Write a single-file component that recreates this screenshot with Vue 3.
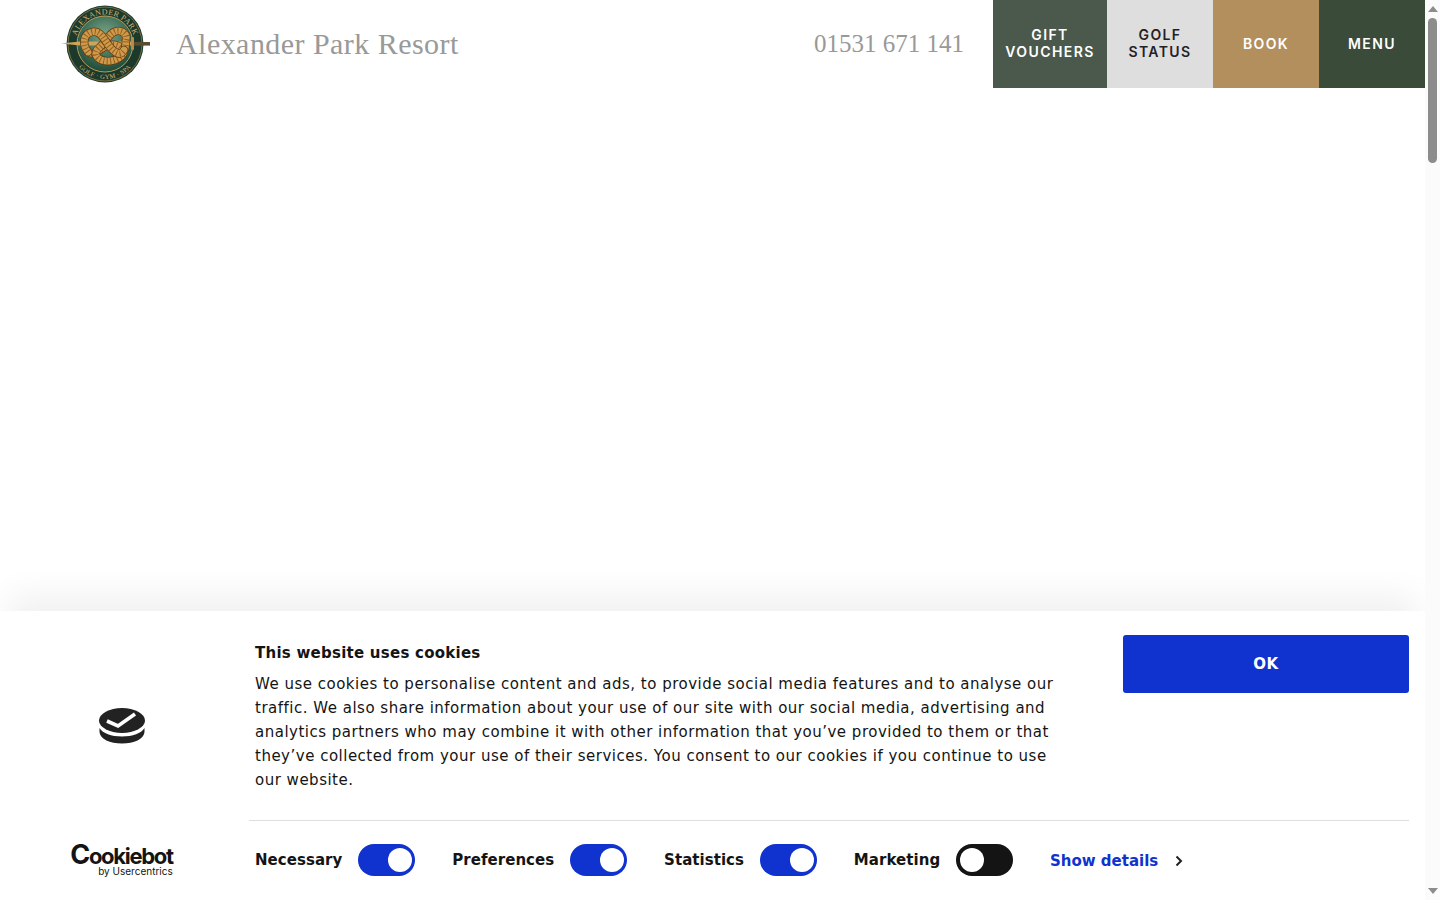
<script setup>
const buttons = [
  { lines: ['GIFT', 'VOUCHERS'], cls: 'btn-gift' },
  { lines: ['GOLF', 'STATUS'], cls: 'btn-golf' },
  { lines: ['BOOK'], cls: 'btn-book' },
  { lines: ['MENU'], cls: 'btn-menu' }
]

const toggles = [
  { label: 'Necessary', on: true },
  { label: 'Preferences', on: true },
  { label: 'Statistics', on: true },
  { label: 'Marketing', on: false }
]

// the knot is three rope pieces, each drawn three times: edge, body, twist marks
const ropes = [
  'M28 52 C36 57 40 46 50 45 C56 44 60 46 62 50',
  'M66 40 C68 33 60 29 54 32 C48 35 46 42 40 47 C36 50 34 54 38 58 C44 63 58 62 63 54 C65 50 66 46 66 40',
  'M28 52 C22 44 23 34 32 32 C41 30 44 40 50 47 C54 52 60 57 64 50'
]
</script>

<template>
  <div class="page">
    <div class="main">
      <header class="header">
        <svg class="logo" width="92" height="88" viewBox="0 0 92 88">
          <defs>
            <radialGradient id="medal" cx="50%" cy="35%" r="65%">
              <stop offset="0%" stop-color="#7fa78a" />
              <stop offset="60%" stop-color="#3f7059" />
              <stop offset="100%" stop-color="#1f4a37" />
            </radialGradient>
            <path id="arcTop" d="M 15.5 44 A 29.5 29.5 0 0 1 74.5 44" />
            <path id="arcBottom" d="M 10 44 A 35 35 0 0 0 80 44" />
          </defs>
          <circle cx="45" cy="44" r="38.5" fill="#1c3a2c" />
          <circle cx="45" cy="44" r="37" fill="none" stroke="#8d7a45" stroke-width="0.8" />
          <circle cx="45" cy="44" r="28" fill="url(#medal)" stroke="#b79c5c" stroke-width="1" />
          <text class="logo-txt"><textPath href="#arcTop" startOffset="50%" text-anchor="middle">ALEXANDER PARK</textPath></text>
          <text class="logo-txt small"><textPath href="#arcBottom" startOffset="50%" text-anchor="middle">GOLF · GYM · SPA</textPath></text>
          <path d="M1 43.5 L20 41.5 L72 41.5 L72 45.5 L20 45.5 Z" fill="#d2a456" />
          <rect x="71" y="37" width="3" height="13" rx="1" fill="#b58c45" />
          <rect x="74" y="42" width="16" height="3.6" fill="#5d4a30" />
          <g v-for="d in ropes" :key="d" fill="none">
            <path :d="d" stroke="#5f3b12" stroke-width="8.4" stroke-linecap="round" />
            <path :d="d" stroke="#d09a4c" stroke-width="6.8" stroke-linecap="round" />
            <path :d="d" stroke="#93601f" stroke-width="6.4" stroke-dasharray="1 2.4" />
          </g>
        </svg>
        <div class="title">Alexander Park Resort</div>
        <div class="phone">01531 671 141</div>
        <nav class="nav">
          <a v-for="b in buttons" :key="b.cls" class="nav-btn" :class="b.cls">
            <span v-for="line in b.lines" :key="line">{{ line }}</span>
          </a>
        </nav>
      </header>

      <section class="dialog">
        <div class="brand">
          <svg class="cookie-icon" width="46" height="36" viewBox="0 0 46 36">
            <path d="M0.5 20 C4 25.5 12 28.5 23 28.5 C34 28.5 42 25.5 45.5 20 L45.5 24 C45 31 35 35.5 23 35.5 C11 35.5 1 31 0.5 24 Z" fill="#222" />
            <ellipse cx="23" cy="12.5" rx="23" ry="12.5" fill="#222" />
            <path d="M8 13 L19 18 L36 6" fill="none" stroke="#fff" stroke-width="3.6" />
          </svg>
          <div class="cookiebot">
            <div class="cb-name"><span class="cb-c">C</span>ookiebot</div>
            <div class="cb-by">by Usercentrics</div>
          </div>
        </div>

        <div class="content">
          <div class="top">
            <div class="copy">
              <h2 class="heading">This website uses cookies</h2>
              <p class="text">We use cookies to personalise content and ads, to provide social media features and to analyse our traffic. We also share information about your use of our site with our social media, advertising and analytics partners who may combine it with other information that you’ve provided to them or that they’ve collected from your use of their services. You consent to our cookies if you continue to use our website.</p>
            </div>
            <button class="ok">OK</button>
          </div>
          <div class="controls">
            <div v-for="t in toggles" :key="t.label" class="control">
              <span class="control-label">{{ t.label }}</span>
              <span class="switch" :class="{ off: !t.on }"><span class="knob"></span></span>
            </div>
            <a class="details">Show details
              <svg class="chevron" width="8" height="12" viewBox="0 0 8 12"><path d="M1.5 1.5 L6 6 L1.5 10.5" fill="none" stroke="#222" stroke-width="2" /></svg>
            </a>
          </div>
        </div>
      </section>
    </div>

    <aside class="scrollbar">
      <span class="arrow up"></span>
      <span class="thumb"></span>
      <span class="arrow down"></span>
    </aside>
  </div>
</template>

<style>
html, body {
  margin: 0;
  overflow: hidden;
  background: #fff;
}
</style>

<style scoped>
.page {
  display: flex;
  height: 900px;
  overflow: hidden;
}
.main {
  flex: 1;
  display: flex;
  flex-direction: column;
  justify-content: space-between;
  min-width: 0;
}
.header {
  display: flex;
  align-items: center;
  height: 88px;
  padding-left: 60px;
}
.logo {
  flex: none;
}
.logo-txt {
  font-family: "Liberation Serif", serif;
  font-size: 8px;
  letter-spacing: 0.3px;
  fill: #d0b678;
}
.logo-txt.small {
  font-size: 6.5px;
}
.title {
  margin-left: 24px;
  font-family: "Liberation Serif", serif;
  font-size: 30px;
  letter-spacing: 0.45px;
  color: #999;
}
.phone {
  margin-left: auto;
  margin-right: 29px;
  font-family: "Liberation Serif", serif;
  font-size: 25px;
  color: #999;
}
.nav {
  display: flex;
  height: 88px;
}
.nav-btn {
  display: flex;
  flex-direction: column;
  align-items: center;
  justify-content: center;
  width: 106px;
  padding-bottom: 2px;
  box-sizing: border-box;
  font-family: Inter, sans-serif;
  font-size: 14px;
  font-weight: 600;
  line-height: 17px;
  letter-spacing: 1.4px;
  color: #fff;
}
.btn-gift {
  width: 114px;
  background: #4a594c;
}
.btn-golf {
  background: #dedede;
  color: #1f2326;
}
.btn-book {
  background: #b38f5e;
}
.btn-menu {
  background: #3a4b3a;
}
.dialog {
  display: flex;
  height: 289px;
  box-sizing: border-box;
  background: #fff;
  box-shadow: 0 -24px 32px -8px rgba(0, 0, 0, 0.06);
  font-family: "DejaVu Sans", sans-serif;
  color: #141414;
}
.brand {
  flex: none;
  width: 249px;
  box-sizing: border-box;
  display: flex;
  flex-direction: column;
  align-items: center;
  padding-top: 97px;
}
.cookie-icon {
  margin-left: -6px;
}
.cookiebot {
  margin-top: 102px;
  margin-left: -6px;
  text-align: right;
  font-family: Inter, sans-serif;
  color: #141414;
}
.cb-name {
  font-size: 22px;
  font-weight: 700;
  line-height: 18px;
  letter-spacing: -1.3px;
}
.cb-c {
  font-size: 27px;
  line-height: 18px;
}
.cb-by {
  margin-top: 1px;
  font-size: 10px;
  line-height: 11px;
}
.content {
  flex: 1;
  min-width: 0;
  padding: 24px 16px 0 0;
}
.top {
  display: flex;
  justify-content: space-between;
  height: 185px;
  border-bottom: 1px solid #dedede;
}
.copy {
  width: 812px;
  padding: 9px 0 0 6px;
  box-sizing: border-box;
}
.heading {
  margin: 0 0 9px;
  font-size: 15px;
  font-weight: 700;
  line-height: 19px;
  letter-spacing: 0.25px;
}
.text {
  margin: 0;
  font-size: 15px;
  line-height: 24px;
  letter-spacing: 0.5px;
}
.ok {
  width: 286px;
  height: 58px;
  padding-bottom: 2px;
  border: none;
  border-radius: 3px;
  background: #1032cf;
  color: #fff;
  font-family: "DejaVu Sans", sans-serif;
  font-size: 15px;
  font-weight: 700;
  letter-spacing: 0.5px;
}
.controls {
  display: flex;
  align-items: center;
  padding: 23px 0 0 6px;
}
.control {
  display: flex;
  align-items: center;
  margin-right: 37.3px;
}
.control-label {
  margin-right: 15.5px;
  font-size: 15px;
  font-weight: 700;
  letter-spacing: 0.05px;
}
.switch {
  display: flex;
  justify-content: flex-end;
  align-items: center;
  width: 57px;
  height: 32px;
  box-sizing: border-box;
  padding: 0 3px;
  border-radius: 16px;
  background: #1032cf;
}
.switch.off {
  justify-content: flex-start;
  padding: 0 4px;
  background: #141414;
}
.knob {
  width: 24px;
  height: 24px;
  border-radius: 50%;
  background: #fff;
}
.details {
  display: flex;
  align-items: center;
  gap: 17px;
  padding-top: 2px;
  font-size: 15px;
  font-weight: 700;
  color: #1032cf;
}
.scrollbar {
  flex: none;
  width: 15px;
  display: flex;
  flex-direction: column;
  align-items: center;
  background: #fbfbfb;
}
.thumb {
  width: 9px;
  height: 145px;
  margin-top: 6px;
  border-radius: 5px;
  background: #8c8c8c;
}
.arrow {
  width: 0;
  height: 0;
  border-left: 5px solid transparent;
  border-right: 5px solid transparent;
}
.arrow.up {
  margin-top: 6px;
  border-bottom: 6px solid #8c8c8c;
}
.arrow.down {
  margin-top: auto;
  margin-bottom: 6px;
  border-top: 6px solid #8c8c8c;
}
</style>
